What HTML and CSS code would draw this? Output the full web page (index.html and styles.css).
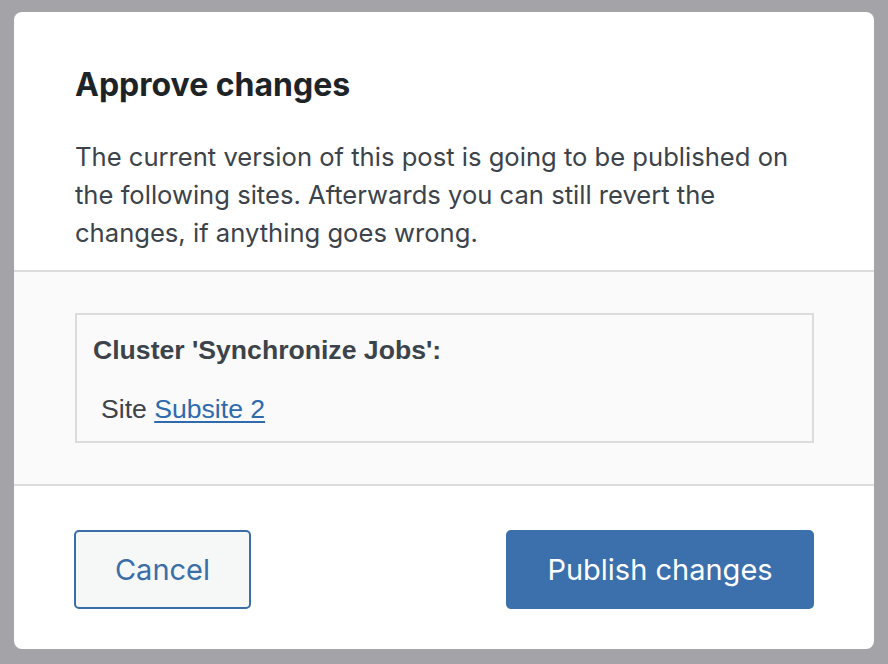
FILE: index.html
```html
<!DOCTYPE html>
<html>
<head>
<meta charset="utf-8">
<link rel="stylesheet" href="styles.css">
</head>
<body>
<div class="dialog">
  <div class="head">
    <h1 class="title">Approve changes</h1>
    <p class="desc">The current version of this post is going to be published on the following sites. Afterwards you can still revert the changes, if anything goes wrong.</p>
  </div>
  <div class="body">
    <div class="box">
      <div class="cluster">Cluster 'Synchronize Jobs':</div>
      <div class="site">Site <a href="#" class="link">Subsite 2</a></div>
    </div>
  </div>
  <div class="foot">
    <button class="btn btn-secondary">Cancel</button>
    <button class="btn btn-primary">Publish changes</button>
  </div>
</div>
</body>
</html>
```
FILE: styles.css
```css
html, body {
  margin: 0;
  padding: 0;
}
body {
  background: #a4a3a8;
  width: 888px;
  height: 664px;
  padding: 12px 14px 0 14px;
  box-sizing: border-box;
  font-family: Inter, "Noto Sans", sans-serif;
}
.dialog {
  width: 860px;
  height: 637px;
  background: #fff;
  border-radius: 8px;
  display: flex;
  flex-direction: column;
  overflow: hidden;
}
.head {
  padding: 55px 70px 0 61px;
  height: 260px;
  box-sizing: border-box;
  border-bottom: 2px solid #dcdcde;
}
.title {
  margin: 0;
  font-size: 32px;
  font-weight: 700;
  color: #1d2327;
  line-height: 36px;
}
.desc {
  margin: 35px 0 0 0;
  font-size: 25.6px;
  line-height: 38px;
  color: #3c434a;
}
.body {
  background: #fafafa;
  padding: 41px 60px 41px 61px;
  border-bottom: 2px solid #dcdcde;
}
.box {
  border: 2px solid #dcdcde;
  padding: 20px 16px 0 16px;
  height: 130px;
  box-sizing: border-box;
  font-family: "Liberation Sans", Arial, sans-serif;
  font-size: 26.6px;
  line-height: 30px;
  color: #3c434a;
}
.cluster {
  font-weight: 700;
}
.site {
  margin-top: 29px;
  padding-left: 8px;
}
.link {
  color: #2f6aad;
  text-decoration: underline;
  text-underline-offset: 3px;
}
.foot {
  flex: 1;
  display: flex;
  justify-content: space-between;
  align-items: flex-start;
  padding: 44px 60px 0 60px;
}
.btn {
  height: 79px;
  border-radius: 5px;
  font-family: Inter, "Noto Sans", sans-serif;
  font-size: 29px;
  cursor: pointer;
}
.btn-secondary {
  width: 177px;
  background: #f6f7f7;
  border: 2px solid #3a6ea8;
  color: #3a6ea8;
}
.btn-primary {
  width: 308px;
  background: #3b70ac;
  border: none;
  color: #fff;
}
```
